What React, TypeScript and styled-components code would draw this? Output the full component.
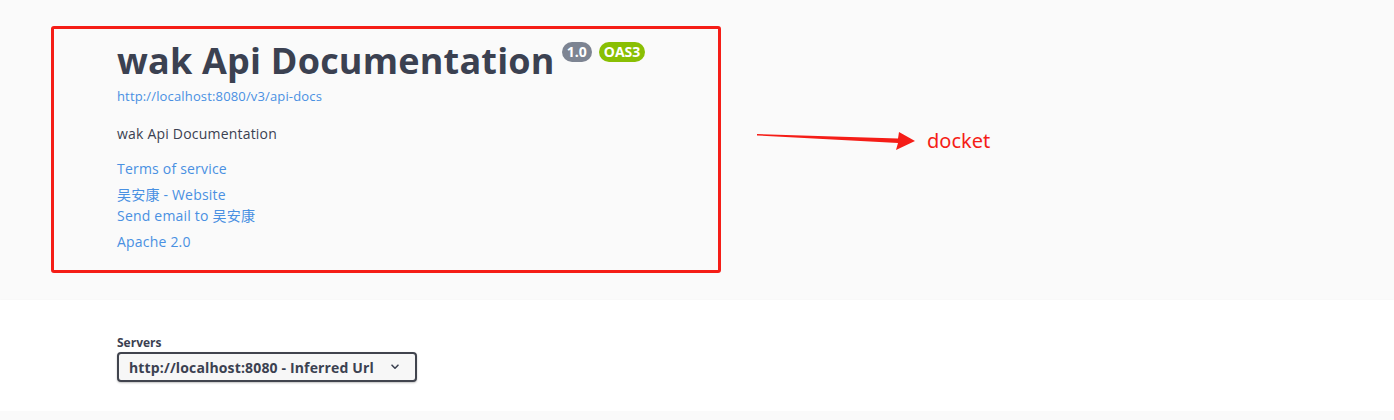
import React from 'react'
import styled, { createGlobalStyle } from 'styled-components'

const GlobalStyle = createGlobalStyle`
  body {
    margin: 0;
    background: #fafafa;
    font-family: "Open Sans", "Noto Sans CJK SC", sans-serif;
    color: #3b4151;
  }
`

const fontStack = `"Open Sans", "Noto Sans CJK SC", sans-serif`

const InfoSection = styled.div`
  background: #fafafa;
  display: flex;
  align-items: flex-start;
  padding: 26px 0 27px 51px;
`

const Docket = styled.div`
  box-sizing: border-box;
  width: 670px;
  height: 247px;
  border: 3px solid #f51d17;
  border-radius: 3px;
  padding: 6px 0 0 63px;
`

const TitleRow = styled.div`
  display: flex;
  align-items: flex-start;
`

const Title = styled.h2`
  margin: 0;
  font-family: ${fontStack};
  font-size: 36px;
  font-weight: 700;
  line-height: 52px;
  letter-spacing: 0.2px;
  color: #3b4151;
`

const Badge = styled.span<{ $bg: string; $gap: number }>`
  display: inline-block;
  margin: 7px 0 0 ${p => p.$gap}px;
  padding: 0 5px;
  height: 20px;
  line-height: 20px;
  border-radius: 57px;
  background: ${p => p.$bg};
  color: #fff;
  font-family: ${fontStack};
  font-size: 14px;
  font-weight: 700;
`

const UrlLink = styled.a`
  display: block;
  margin-top: 0;
  font-family: ${fontStack};
  font-size: 13px;
  line-height: 19px;
  letter-spacing: 0.15px;
  color: #4990e2;
  text-decoration: none;
`

const Description = styled.p`
  margin: 18px 0 14px;
  font-family: ${fontStack};
  font-size: 14px;
  line-height: 20px;
  letter-spacing: 0.2px;
  color: #3b4151;
`

const InfoLink = styled.a<{ $gap?: number }>`
  display: block;
  margin-top: ${p => p.$gap ?? 0}px;
  font-family: ${fontStack};
  font-size: 14px;
  line-height: 21px;
  letter-spacing: 0.2px;
  color: #4990e2;
  text-decoration: none;
`

const Annotation = styled.div`
  display: flex;
  align-items: center;
  margin: 101px 0 0 36px;
`

const AnnotationText = styled.span`
  margin-left: 10px;
  font-family: "Noto Sans", sans-serif;
  font-size: 20px;
  color: #f51d17;
`

const SchemeContainer = styled.div`
  background: #fff;
  box-shadow: 0 1px 2px 0 rgba(0, 0, 0, 0.15);
  padding: 36px 0 29px 117px;
`

const ServersLabel = styled.label`
  display: block;
  font-family: ${fontStack};
  font-size: 12px;
  font-weight: 700;
  line-height: 14px;
  color: #3b4151;
  margin-bottom: 2px;
`

const Select = styled.div`
  box-sizing: border-box;
  width: 300px;
  height: 30px;
  display: flex;
  align-items: center;
  justify-content: space-between;
  padding: 0 14px 0 10px;
  border: 2px solid #41444e;
  border-radius: 4px;
  background: #f7f7f7;
  box-shadow: 0 1px 2px 0 rgba(0, 0, 0, 0.25);
  font-family: ${fontStack};
  font-size: 14px;
  font-weight: 700;
  letter-spacing: 0.15px;
  color: #3b4151;
`

const Arrow = () => (
  <svg width="160" height="24" viewBox="0 0 160 24">
    <polygon
      points="0,5 141,9.5 142,3 158,12 139,21 141,14 0,6.5"
      fill="#f51d17"
    />
  </svg>
)

const Chevron = () => (
  <svg width="12" height="12" viewBox="0 0 20 20">
    <path d="M5 7l5 5 5-5" fill="none" stroke="#3b4151" strokeWidth="2.6" strokeLinecap="round" strokeLinejoin="round" />
  </svg>
)

export default function App() {
  return (
    <>
      <GlobalStyle />
      <InfoSection>
        <Docket>
          <TitleRow>
            <Title>wak Api Documentation</Title>
            <Badge $bg="#7d8492" $gap={7}>1.0</Badge>
            <Badge $bg="#89bf04" $gap={7}>OAS3</Badge>
          </TitleRow>
          <UrlLink href="#">http://localhost:8080/v3/api-docs</UrlLink>
          <Description>wak Api Documentation</Description>
          <InfoLink href="#">Terms of service</InfoLink>
          <InfoLink href="#" $gap={5}>吴安康 - Website</InfoLink>
          <InfoLink href="#">Send email to 吴安康</InfoLink>
          <InfoLink href="#" $gap={5}>Apache 2.0</InfoLink>
        </Docket>
        <Annotation>
          <Arrow />
          <AnnotationText>docket</AnnotationText>
        </Annotation>
      </InfoSection>
      <SchemeContainer>
        <ServersLabel>Servers</ServersLabel>
        <Select>
          <span>http://localhost:8080 - Inferred Url</span>
          <Chevron />
        </Select>
      </SchemeContainer>
    </>
  )
}
